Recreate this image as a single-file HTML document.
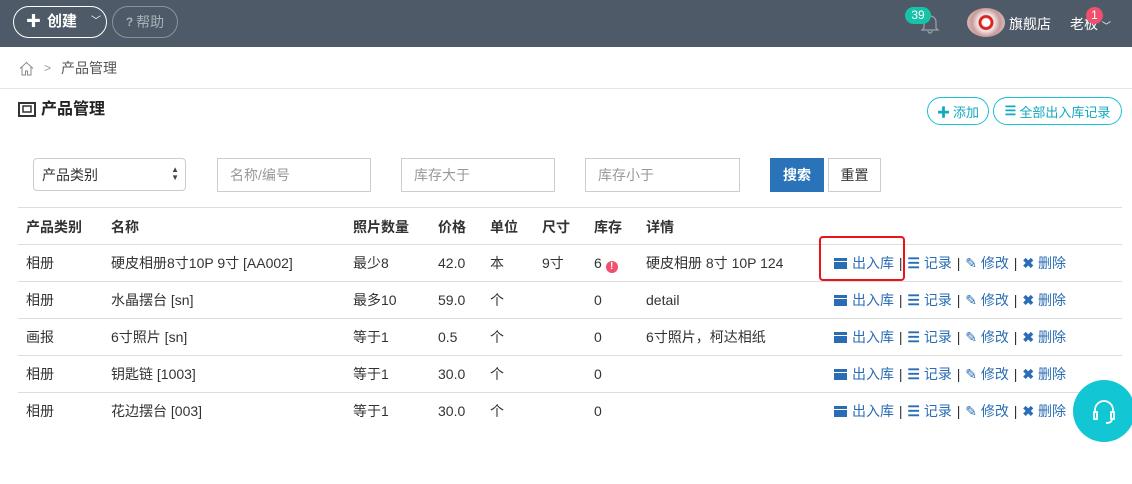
<!DOCTYPE html>
<html><head><meta charset="utf-8"><style>
*{box-sizing:border-box;margin:0;padding:0}
body{width:1132px;height:484px;overflow:hidden;background:#fff;font-family:"Liberation Sans","Noto Sans CJK SC",sans-serif;font-size:14px;color:#333;position:relative}
.abs{position:absolute}
.nav{left:0;top:0;width:1132px;height:47px;background:#4f5a68}
.pill{border:1px solid #fff;border-radius:16px;height:32px;color:#fff;display:flex;align-items:center;line-height:20px}
.inp{border:1px solid #ccc;height:34px;color:#999;padding-left:12px;display:flex;align-items:center;font-size:14px}
.line{left:18px;width:1104px;height:1px;background:#ddd}
.c{position:absolute;font-size:14px;white-space:nowrap;line-height:20px;height:20px}
.h{font-weight:bold}
.act{color:#2a6db5}
.bar{color:#333;margin:0 1px}
</style></head><body>
<div class="abs nav"></div>
<div class="abs pill" style="left:13px;top:6px;width:94px;padding-left:12px;font-weight:bold;font-size:15px"><span style="font-size:15px;margin-right:6px">✚</span>创建<span style="font-size:10px;margin-left:14px;font-weight:normal">﹀</span></div>
<div class="abs pill" style="left:112px;top:6px;width:66px;border-color:#8a939d;color:#a8b0b8;justify-content:center;font-size:14px"><b style="font-size:12px;margin-right:3px">?</b>帮助</div>
<svg class="abs" style="left:920px;top:12px" width="20" height="22" viewBox="0 0 20 22"><path d="M4 16V10a6 6 0 0 1 12 0v6l2 2H2z M8 19a2 2 0 0 0 4 0" fill="none" stroke="#9aa3ad" stroke-width="1.2"/></svg>
<div class="abs" style="left:905px;top:7px;width:26px;height:17px;border-radius:9px;background:#17c3a8;color:#fff;font-size:12px;text-align:center;line-height:17px">39</div>
<div class="abs" style="left:967px;top:8px;width:38px;height:29px;border-radius:50%;background:radial-gradient(circle,#fff 0 4px,#d22 5px 7px,#eee 8px,#c99 14px,#ddd)"></div>
<div class="abs" style="left:1009px;top:14px;color:#fff;font-size:14px;line-height:20px">旗舰店</div>
<div class="abs" style="left:1070px;top:14px;color:#fff;font-size:14px;line-height:20px">老板 <span style="font-size:9px">﹀</span></div>
<div class="abs" style="left:1086px;top:7px;width:17px;height:17px;border-radius:50%;background:#f0506e;color:#fff;font-size:12px;text-align:center;line-height:17px">1</div>
<svg class="abs" style="left:19px;top:61px" width="15" height="15" viewBox="0 0 15 15"><path d="M1 7.5L7.5 1.5 14 7.5M3 6v8h3.5v-4h2v4H12V6" fill="none" stroke="#888" stroke-width="1"/></svg>
<div class="abs" style="left:44px;top:60px;color:#999;font-size:12px;line-height:16px">&gt;</div>
<div class="abs" style="left:61px;top:58px;color:#555;font-size:14px;line-height:20px">产品管理</div>
<div class="abs" style="left:0;top:88px;width:1132px;height:1px;background:#e5e5e5"></div>
<svg class="abs" style="left:18px;top:102px" width="18" height="15" viewBox="0 0 18 15"><rect x="1" y="1" width="16" height="13" fill="none" stroke="#333" stroke-width="2"/><rect x="5" y="4" width="8" height="6" fill="none" stroke="#333" stroke-width="1.5"/></svg>
<div class="abs" style="left:41px;top:100px;font-weight:bold;font-size:16px;color:#222;line-height:20px">产品管理</div>
<div class="abs" style="left:927px;top:97px;width:62px;height:28px;border:1px solid #18c2d2;border-radius:14px;color:#12a9c0;font-size:13px;display:flex;align-items:center;justify-content:center"><b style="margin-right:3px">✚</b>添加</div>
<div class="abs" style="left:993px;top:97px;width:129px;height:28px;border:1px solid #18c2d2;border-radius:14px;color:#12a9c0;font-size:13px;display:flex;align-items:center;justify-content:center"><b style="margin-right:3px">☰</b>全部出入库记录</div>
<div class="abs inp" style="left:33px;top:158px;width:153px;height:33px;border-radius:4px;color:#333;padding-left:8px">产品类别<span style="position:absolute;right:6px;top:7px;font-size:8px;line-height:8px;color:#444">▲<br>▼</span></div>
<div class="abs inp" style="left:217px;top:158px;width:154px">名称/编号</div>
<div class="abs inp" style="left:401px;top:158px;width:154px">库存大于</div>
<div class="abs inp" style="left:585px;top:158px;width:155px">库存小于</div>
<div class="abs" style="left:770px;top:158px;width:54px;height:34px;background:#2a73b8;color:#fff;font-weight:bold;display:flex;align-items:center;justify-content:center">搜索</div>
<div class="abs" style="left:828px;top:158px;width:53px;height:34px;border:1px solid #ccc;display:flex;align-items:center;justify-content:center">重置</div>
<div class="abs line" style="top:207px"></div>
<div class="abs line" style="top:244px"></div>
<div class="abs line" style="top:281px"></div>
<div class="abs line" style="top:318px"></div>
<div class="abs line" style="top:355px"></div>
<div class="abs line" style="top:392px"></div>
<div class="c h" style="left:26px;top:217px">产品类别</div><div class="c h" style="left:111px;top:217px">名称</div><div class="c h" style="left:353px;top:217px">照片数量</div><div class="c h" style="left:438px;top:217px">价格</div><div class="c h" style="left:490px;top:217px">单位</div><div class="c h" style="left:542px;top:217px">尺寸</div><div class="c h" style="left:594px;top:217px">库存</div><div class="c h" style="left:646px;top:217px">详情</div>
<div id="rows"></div>
<script>
var d=[["相册","硬皮相册8寸10P 9寸 [AA002]","最少8","42.0","本","9寸","6","硬皮相册 8寸 10P 124"],["相册","水晶摆台 [sn]","最多10","59.0","个","","0","detail"],["画报","6寸照片 [sn]","等于1","0.5","个","","0","6寸照片，柯达相纸"],["相册","钥匙链 [1003]","等于1","30.0","个","","0",""],["相册","花边摆台 [003]","等于1","30.0","个","","0",""]];
var xs=[26,111,353,438,490,542,594,646],h="";
d.forEach(function(r,i){var y=253+i*37;r.forEach(function(v,j){h+='<div class="c" style="left:'+xs[j]+'px;top:'+y+'px">'+v+(i==0&&j==6?' <span style="display:inline-block;width:12px;height:12px;border-radius:50%;background:#f0506e;color:#fff;font-size:10px;line-height:12px;text-align:center;font-weight:bold;vertical-align:-1px">!</span>':'')+'</div>'});
h+='<div class="c act" style="left:834px;top:'+y+'px"><span style="display:inline-block;width:13px;height:11px;background:#2a6db5;vertical-align:-1px;border-top:3px solid #2a6db5;box-shadow:inset 0 1px 0 #fff;margin-right:5px"></span>出入库<span class="bar"> | </span><b>☰</b> 记录<span class="bar"> | </span>✎ 修改<span class="bar"> | </span><b>✖</b> 删除</div>';});
document.getElementById('rows').innerHTML=h;
</script>
<div class="abs" style="left:819px;top:236px;width:86px;height:45px;border:2px solid #e8141a;border-radius:4px"></div>
<div class="abs" style="left:1073px;top:380px;width:62px;height:62px;border-radius:50%;background:#13c6d3"></div>
<svg class="abs" style="left:1091px;top:398px" width="26" height="28" viewBox="0 0 26 28"><path d="M4 15v-3a9 9 0 0 1 18 0v3M3 14h3v7H3zM20 14h3v7h-3zM21 21q0 4-6 4" fill="none" stroke="#fff" stroke-width="1.8"/></svg>
</body></html>
